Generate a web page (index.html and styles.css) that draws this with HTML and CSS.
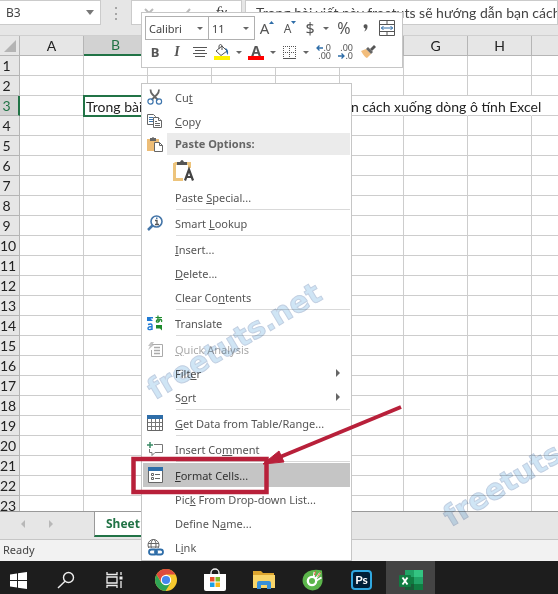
FILE: index.html
```html
<!DOCTYPE html>
<html lang="vi">
<head>
<meta charset="utf-8">
<title>Excel</title>
<link rel="stylesheet" href="styles.css">
</head>
<body>
<div class="app">
  <header class="formula-bar">
    <div class="name-box">
      <input class="name-input" type="text" value="B3" aria-label="Name Box">
      <button class="plain" aria-label="Open names"><svg width="8" height="5" viewBox="0 0 8 5"><path d="M0 0h8L4 5z" fill="#777"/></svg></button>
    </div>
    <span class="dots">⋮</span>
    <div class="fx-box">
      <button class="plain" aria-label="Cancel"><svg width="10" height="10" viewBox="0 0 10 10"><path d="M1 1l8 8M9 1L1 9" stroke="#bbb" stroke-width="2"/></svg></button>
      <button class="plain" aria-label="Enter"><svg width="12" height="10" viewBox="0 0 12 10"><path d="M1 6l3 3 7-8" fill="none" stroke="#bbb" stroke-width="2"/></svg></button>
      <button class="plain fx" aria-label="Insert Function">fx</button>
    </div>
    <input class="formula-input" type="text" aria-label="Formula" value="Trong bài viết này freetuts sẽ hướng dẫn bạn cách xuống dòng ô tính Excel">
  </header>

  <main class="sheet">
    <table class="grid">
      <thead>
        <tr><th class="corner"><svg width="12" height="12" viewBox="0 0 12 12"><path d="M12 0v12H0z" fill="#b4b4b4"/></svg></th></tr>
      </thead>
      <tbody></tbody>
    </table>
  </main>

  <nav class="tabs">
    <button class="plain" aria-label="Previous sheet"><svg width="4" height="8" viewBox="0 0 4 8"><path d="M4 0v8L0 4z" fill="#b8b8b8"/></svg></button>
    <button class="plain" aria-label="Next sheet"><svg width="4" height="8" viewBox="0 0 4 8"><path d="M0 0v8l4-4z" fill="#b8b8b8"/></svg></button>
    <button class="tab">Sheet1</button>
  </nav>
  <div class="status">Ready</div>

  <footer class="taskbar">
    <div class="system">
      <button class="task" aria-label="Start"><svg width="17" height="17" viewBox="0 0 17 17" fill="#fff"><path d="M0 2.500L7 1.500V8H0zM8 1.300L17 0v8H8zM0 9h7v6.500L0 14.500zM8 9h9v8l-9-1.300z"/></svg></button>
      <button class="task" aria-label="Search"><svg width="18" height="18" viewBox="0 0 18 18" fill="none" stroke="#eee" stroke-width="1.400"><circle cx="11.500" cy="6.500" r="5"/><path d="M8 10.200L1 17"/></svg></button>
      <button class="task" aria-label="Task View"><svg width="17" height="16" viewBox="0 0 17 16" fill="none" stroke="#eee" stroke-width="1.300"><path d="M1 0v2.500h10V0M1 16v-2.500h10V16M1 5h10v6H1zM15 0v3M15 9v7"/><path d="M13.500 4.500h3v3h-3z" fill="#eee" stroke="none"/></svg></button>
    </div>
    <button class="task app-task" aria-label="Chrome"><svg width="22" height="22" viewBox="0 0 22 22"><circle cx="11" cy="11" r="11" fill="#f7c92e"/><path d="M1.500 5.500A11 11 0 0 0 10.500 22L15.700 13.700 11 16 6.300 13.700z" fill="#2fa456"/><path d="M1.500 5.500A11 11 0 0 1 20.500 5.500H11L6.200 13z" fill="#dd4b3e"/><circle cx="11" cy="11" r="5.200" fill="#fff"/><circle cx="11" cy="11" r="4.100" fill="#4586ee"/></svg></button>
    <button class="task app-task" aria-label="Store"><svg width="24" height="24" viewBox="0 0 24 24"><path d="M8 7V5a4 4 0 0 1 8 0v2" fill="none" stroke="#eee" stroke-width="1.400"/><path d="M1 6h22v15q0 2-2 2H3q-2 0-2-2z" fill="#fff"/><path d="M7 9h4.500v4.500H7z" fill="#e8502c"/><path d="M12.500 9H17v4.500h-4.500z" fill="#7cb928"/><path d="M7 14.500h4.500V19H7z" fill="#1ba0e6"/><path d="M12.500 14.500H17V19h-4.500z" fill="#f9b817"/></svg></button>
    <button class="task app-task" aria-label="File Explorer"><svg width="22" height="20" viewBox="0 0 22 20"><path d="M0 1h8l2 2h11v5H0z" fill="#dca52f"/><path d="M0 5h22v13H0z" fill="#f8d569"/><path d="M4 19v-6q0-2 2-2h10q2 0 2 2v6h-4v-4H8v4z" fill="#378fd9"/></svg></button>
    <button class="task app-task" aria-label="Browser"><svg width="22" height="22" viewBox="0 0 22 22"><path d="M20 1.500Q12-.5 6 2.500A10 10 0 1 0 20.500 10z" fill="#5cb54b"/><circle cx="10" cy="12" r="5.300" fill="#fff"/><circle cx="10" cy="12" r="3" fill="#5cb54b"/><path d="M11.500 9l1-6M13.500 10l4.500-6M14.500 11.500l5-3" stroke="#fff" stroke-width="1.800"/><path d="M12.500 6l1-4M15.500 7.500l3-4" stroke="#e3563b"/></svg></button>
    <button class="task app-task" aria-label="Photoshop"><span class="ps">Ps</span></button>
    <button class="task app-task active" aria-label="Excel"><svg width="24" height="22" viewBox="0 0 24 22"><path d="M6 1h9v7H6z" fill="#21a366"/><path d="M15 1h9v7h-9z" fill="#33c481"/><path d="M6 8h9v7H6z" fill="#107c41"/><path d="M15 8h9v7h-9z" fill="#21a366"/><path d="M6 15h18v6H6z" fill="#185c37"/><path d="M15 15h9v6h-9z" fill="#107c41"/><rect y="6" width="12" height="12" rx="1" fill="#107c41"/><path d="M3.500 8.500l5 7M8.500 8.500l-5 7" stroke="#fff" stroke-width="1.900"/></svg></button>
  </footer>

  <div class="mini-toolbar" role="toolbar">
    <div class="tools">
      <span class="pick pick-font"><select aria-label="Font"><option>Calibri</option></select><i class="down"></i></span>
      <span class="pick pick-size"><select aria-label="Font Size"><option>11</option></select><i class="down"></i></span>
      <button class="tool w24" aria-label="Increase Font Size"><span class="letter">A</span><svg class="caret" width="5" height="3" viewBox="0 0 5 3"><path d="M0 3h5L2.500 0z" fill="#2e6da8"/></svg></button>
      <button class="tool w22" aria-label="Decrease Font Size"><span class="letter small">A</span><svg class="caret" width="5" height="3" viewBox="0 0 5 3"><path d="M0 0h5L2.500 3z" fill="#2e6da8"/></svg></button>
      <button class="tool w18 sign">$</button>
      <button class="tool w14" aria-label="Currency options"><i class="down"></i></button>
      <button class="tool w22 sign">%</button>
      <button class="tool w20" aria-label="Comma Style"><svg width="5" height="8" viewBox="0 0 5 8"><path d="M.5 2a2 2 0 1 1 4 .5Q4.500 6 1 7.500 2.500 6 2.500 4.500.5 4 .5 2z" fill="#555"/></svg></button>
      <button class="tool w24" aria-label="Merge and Center"><svg width="16" height="16" viewBox="0 0 16 16" fill="none" stroke="#555"><path d="M.5.5h15v15H.5zM.5 4.500h15M.5 11.500h15M8 .5v4M8 11.500v4"/><path d="M2 8h12M4.500 6L2.500 8l2 2M11.500 6l2 2-2 2" stroke="#2e6da8"/></svg></button>
    </div>
    <div class="tools">
      <button class="tool w20 bold">B</button>
      <button class="tool w24 italic">I</button>
      <button class="tool w22" aria-label="Center"><svg width="14" height="11" viewBox="0 0 14 11" stroke="#555"><path d="M0 .5h14M2 3.500h10M0 6.500h14M2 9.500h10"/></svg></button>
      <button class="tool w22" aria-label="Fill Color"><svg width="16" height="16" viewBox="0 0 16 16"><path d="M2 7l6-5 5 5-6 4.500z" fill="#fff" stroke="#555"/><path d="M5 5V1.500q1.500-2 3 0V6" fill="none" stroke="#555"/><path d="M11 4q4 1 3 7-2-2-2-5z" fill="#2e6da8"/><path d="M0 12h16v4H0z" fill="#fff200"/></svg></button>
      <button class="tool w12" aria-label="Fill options"><i class="down"></i></button>
      <button class="tool w22 font-color" aria-label="Font Color"><span>A</span></button>
      <button class="tool w12" aria-label="Font Color options"><i class="down"></i></button>
      <button class="tool w20" aria-label="Borders"><svg width="13" height="13" viewBox="0 0 13 13" fill="none" stroke="#555"><path d="M.5 0v12M12.500 0v12M6.500 0v12M0 .5h13M0 6.500h13" stroke-dasharray="1 1"/><path d="M0 12.500h13"/></svg></button>
      <button class="tool w14" aria-label="Border options"><i class="down"></i></button>
      <button class="tool w20 decimals" aria-label="Increase Decimal"><span><svg width="7" height="6" viewBox="0 0 7 6"><path d="M7 3H1M3.500.5L1 3l2.500 2.500" fill="none" stroke="#2e6da8" stroke-width="1.300"/></svg>.0</span><span>.00</span></button>
      <button class="tool w24 decimals" aria-label="Decrease Decimal"><span>.00</span><span><svg width="7" height="6" viewBox="0 0 7 6"><path d="M0 3h6M3.500.5L6 3 3.500 5.500" fill="none" stroke="#2e6da8" stroke-width="1.300"/></svg>.0</span></button>
      <button class="tool w22" aria-label="Format Painter"><svg width="16" height="14" viewBox="0 0 16 14"><path d="M1 6l5-2 5 5-4 4q-2 0-6-7z" fill="#f2bd7c"/><path d="M6 4l2-2 5 5-2 2z" fill="#666"/><path d="M10 4l4-4 2 2-4 4z" fill="#555"/></svg></button>
    </div>
  </div>

  <div class="menu" role="menu">
    <button class="item"><span class="icon"><svg width="16" height="16" viewBox="0 0 16 16" fill="none"><path d="M3.500.5q0 3 2 5L11 11M12 .5q0 3-2 5L4.500 11" stroke="#666" stroke-width="1.800"/><circle cx="3.500" cy="12.500" r="2.600" stroke="#3f76ad" stroke-width="1.200"/><circle cx="12" cy="12.500" r="2.600" stroke="#3f76ad" stroke-width="1.200"/></svg></span><span>Cu<u>t</u></span></button>
    <button class="item"><span class="icon"><svg width="16" height="15" viewBox="0 0 16 15" fill="#fff" stroke="#666"><path d="M.5.500h6l2 2v8h-8z"/><path d="M2 3.500h4M2 5.500h4M2 7.500h4" stroke="#3f76ad"/><path d="M6.500 3.500h5l3 3v7h-8z"/><path d="M11.500 3.500v3h3M8 7.500h2M8 9.500h5M8 11.500h5"/></svg></span><span><u>C</u>opy</span></button>
    <div class="item heading"><span class="icon"><svg width="16" height="16" viewBox="0 0 16 16"><path d="M0 3h12v12H0z" fill="#edbd77"/><path d="M3 2h2q1-2 2 0h2v3H3z" fill="#666"/><path d="M7.500 6.500h5l3 3v6h-8z" fill="#fff" stroke="#666"/><path d="M12.500 6.500v3h3" fill="none" stroke="#666"/></svg></span><span class="heading-text">Paste Options:</span></div>
    <button class="paste-choice" aria-label="Keep Text Only"><svg width="22" height="23" viewBox="0 0 22 23"><path d="M1.500 4v16.500H10M1.500 4.500h4M12 4.500h4.500V9" fill="none" stroke="#edc47c" stroke-width="3"/><path d="M4 3h3q2-4 4 0h3v3H4z" fill="#555"/><path d="M12 21.500l4-11 4 11M13.300 18h5.500" fill="none" stroke="#444" stroke-width="2.200"/></svg></button>
    <button class="item"><span class="icon"></span><span>Paste <u>S</u>pecial...</span></button>
    <hr>
    <button class="item"><span class="icon"><svg width="16" height="16" viewBox="0 0 16 16" fill="none" stroke="#4475a8"><circle cx="9.500" cy="6.500" r="5.500" stroke-width="1.600"/><path d="M5.500 10.500L1 15" stroke-width="2.500"/><path d="M8 5.500h2v4M8 9.500h4" stroke="#555" stroke-width="1.300"/><path d="M9 2.500h1.500v1.500H9z" fill="#4475a8" stroke="none"/></svg></span><span>Smart <u>L</u>ookup</span></button>
    <hr>
    <button class="item"><span class="icon"></span><span><u>I</u>nsert...</span></button>
    <button class="item"><span class="icon"></span><span><u>D</u>elete...</span></button>
    <button class="item"><span class="icon"></span><span>Clear Co<u>n</u>tents</span></button>
    <hr>
    <button class="item"><span class="icon"><svg width="16" height="16" viewBox="0 0 16 16" fill="none"><path d="M0 2h6v1.500H3.500L6 6H0z" fill="#1f7ad4"/><path d="M1 9.500q4-1.500 4 1V15M5 11.500q-4 0-4 2t4 .500" stroke="#1f7ad4" stroke-width="1.400"/><path d="M8.500 2.500h6.500M11 .5q-.5 4 .5 6.500M13.500 4q-1.500 4-4 3-1-2 3-3 3 0 2 3" stroke="#1d8a2c" stroke-width="1.200"/><path d="M9 10h6v5.500L13 13.500H9z" fill="#1d8a2c"/></svg></span><span>Translate</span></button>
    <hr>
    <button class="item" disabled><span class="icon"><svg width="15" height="15" viewBox="0 0 15 15" fill="none" stroke="#aaa"><path d="M4 2.500h10.500v12h-11V8"/><path d="M6 5.500h6M6 8.500h6M6 11.500h6" stroke-width="1.600"/><path d="M3 0h3L4 3h2L0 8l2-4H0z" fill="#c4c4c4" stroke="none"/></svg></span><span><u>Q</u>uick Analysis</span></button>
    <button class="item"><span class="icon"></span><span>Filt<u>e</u>r</span><i class="more"></i></button>
    <button class="item"><span class="icon"></span><span>S<u>o</u>rt</span><i class="more"></i></button>
    <hr>
    <button class="item"><span class="icon"><svg width="16" height="16" viewBox="0 0 16 16" fill="none"><path d="M.5.500h15v15H.5z" fill="#fff" stroke="#666"/><path d="M0 0h16v4H0z" fill="#2e6da8"/><path d="M4.500 4v11M8.500 4v11M12.500 4v11M1 7.500h14M1 11.500h14" stroke="#777"/></svg></span><span><u>G</u>et Data from Table/Range...</span></button>
    <hr>
    <button class="item"><span class="icon"><svg width="16" height="15" viewBox="0 0 16 15" fill="none"><path d="M7 2.500h8.500v8H8l-3 3v-3H2.500V7" stroke="#777"/><path d="M3 0v6M0 3h6" stroke="#3a8a66" stroke-width="1.500"/></svg></span><span>Insert Co<u>m</u>ment</span></button>
    <hr>
    <button class="item selected"><span class="icon"><svg width="15" height="16" viewBox="0 0 15 16" fill="none"><path d="M.5.500h14v15H.5z" fill="#fff" stroke="#666"/><path d="M0 0h15v4H0z" fill="#2e6da8"/><path d="M3.500 6.500h2v2h-2zM3.500 10.500h2v2h-2zM7 7.500h5M7 11.500h5" stroke="#666"/></svg></span><span><u>F</u>ormat Cells...</span></button>
    <button class="item"><span class="icon"></span><span>Pic<u>k</u> From Drop-down List...</span></button>
    <button class="item"><span class="icon"></span><span>Define N<u>a</u>me...</span></button>
    <button class="item"><span class="icon"><svg width="17" height="17" viewBox="0 0 17 17" fill="none"><g stroke="#666"><circle cx="6.500" cy="6" r="5.500"/><ellipse cx="6.500" cy="6" rx="2.500" ry="5.500"/><path d="M1 4.500h11M1 8h11"/></g><path d="M1 9h16v8H1z" fill="#fff"/><g stroke="#2e6da8" stroke-width="1.800"><rect x="2" y="10.500" width="8" height="5" rx="2.500"/><rect x="8" y="10.500" width="8" height="5" rx="2.500"/></g></svg></span><span>L<u>i</u>nk</span></button>
  </div>

  <span class="watermark mark-menu">freetuts.net</span>
  <span class="watermark mark-sheet">freetuts.net</span>

  <svg class="callout" width="276" height="94" viewBox="0 0 276 94" fill="none" stroke="#b8203a">
    <rect x="3.500" y="56" width="133" height="33" stroke-width="4.500"/>
    <path d="M150 54L271 4" stroke-width="4"/>
    <path d="M133 61L149 48 154 59z" fill="#b8203a" stroke-width="1"/>
  </svg>
</div>
<script src="script.js"></script>
</body>
</html>
```

FILE: styles.css
```css
* { box-sizing: border-box; }
body { margin: 0; font-family: "Noto Sans", "Open Sans", sans-serif; font-size: 12px; color: #444; }
button, input, select { font: inherit; color: inherit; margin: 0; padding: 0; border: 0; background: none; }
svg { display: block; flex: none; }

.app { position: relative; display: flex; flex-direction: column; height: 100vh; overflow: hidden; background: #e6e6e6; }
.plain { display: flex; align-items: center; justify-content: center; }

/* Formula bar */
.formula-bar { display: flex; flex: none; height: 36px; padding-bottom: 10px; border-bottom: 1px solid #cfcfcf; }
.name-box, .fx-box, .formula-input { background: #fff; border: 1px solid #cbcbcb; border-width: 1px 1px 1px 0; }
.name-box { display: flex; width: 101px; padding: 0 6px; }
.name-input { flex: 1; min-width: 0; }
.dots { width: 30px; line-height: 26px; text-align: center; font-size: 16px; color: #999; }
.fx-box { display: flex; justify-content: space-between; width: 111px; margin-right: 3px; padding: 0 14px 0 12px; border-left-width: 1px; }
.fx { font: italic 16px "Liberation Serif", serif; }
.formula-input { flex: 1; min-width: 0; padding-left: 10px; border-left-width: 1px; font: 14px Lato, "Noto Sans", sans-serif; }

/* Worksheet */
.sheet { flex: 1; min-height: 0; overflow: hidden; background: #fff; }
.grid { width: 660px; table-layout: fixed; border-collapse: separate; border-spacing: 0; font: 14px Lato, "Noto Sans", sans-serif; color: #222; }
.grid th { height: 20px; padding: 0; background: #e6e6e6; border: solid #b5b5b5; border-width: 0 1px 1px 0; font-weight: 400; line-height: 19px; }
.grid thead th { width: 64px; }
.grid thead .corner { width: 20px; }
.corner svg { margin-left: 4px; }
.grid tbody th { padding-right: 6px; }
.grid td { height: 20px; padding: 0; border: solid #cdcdcd; border-width: 0 1px 1px 0; line-height: 19px; white-space: nowrap; }
.grid .spill { border-right-color: transparent; }
.grid thead .picked { background: #d2d2d2; color: #217346; border-bottom: 2px solid #217346; line-height: 18px; }
.grid tbody .picked { background: #d2d2d2; color: #217346; border-right: 2px solid #217346; padding-right: 5px; }
.grid .active-cell { border: 0; padding-left: 2px; outline: 2px solid #217346; outline-offset: -1px; }
.active-cell span { display: block; width: 0; }

/* Sheet tabs and status */
.tabs { display: flex; flex: none; height: 28px; border-top: 1px solid #999; }
.tabs .plain { width: 28px; height: 24px; }
.tabs .plain:first-child { margin-left: 9px; }
.tab { height: 25px; margin-left: 29px; padding: 0 11px; background: #fff; border-left: 1px solid #999; border-bottom: 2px solid #217346; color: #217346; font-size: 12px; font-weight: 700; }
.status { flex: none; height: 22px; padding-left: 3px; background: #f2f2f2; border-top: 1px solid #c6c6c6; font-size: 11px; line-height: 20px; }

/* Taskbar */
.taskbar { display: flex; flex: none; height: 33px; overflow: hidden; background: #1d1d1d; }
.system { display: flex; margin: 0 3px 0 -6px; }
.task { display: flex; align-items: center; justify-content: center; flex: none; width: 48px; height: 38px; }
.app-task { width: 49px; }
.active { background: #444; }
.ps { width: 21px; height: 20px; border: 2px solid #31a8e0; border-radius: 4px; background: #001e36; color: #fff; font: 700 12px/16px Lato, sans-serif; }

/* Floating format toolbar */
.mini-toolbar { position: absolute; left: 141px; top: 12px; width: 262px; padding: 3px; background: #fff; border: 1px solid #c6c6c6; }
.tools { display: flex; height: 24px; }
.pick { position: relative; display: flex; align-items: center; border: 1px solid #b0b0b0; }
.pick select { width: 100%; height: 22px; padding-left: 3px; appearance: none; font-size: 11px; }
.pick .down { position: absolute; right: 5px; }
.pick-font { width: 64px; }
.pick-size { width: 46px; border-left: 0; }
.down { border: solid transparent; border-width: 3px 3px 0; border-top-color: #666; }
.tool { display: flex; align-items: center; justify-content: center; flex: none; color: #555; }
.w12 { width: 12px; }
.w14 { width: 14px; }
.w18 { width: 18px; }
.w20 { width: 20px; }
.w22 { width: 22px; }
.w24 { width: 24px; }
.letter { font-size: 15px; }
.letter.small { font-size: 12px; }
.caret { align-self: flex-start; margin-top: 5px; }
.sign { font-size: 16px; }
.bold { font-weight: 700; font-size: 13px; }
.italic { font: italic 700 14px "Liberation Serif", serif; }
.font-color span { width: 16px; height: 16px; border-bottom: 4px solid #f00; font-size: 14px; font-weight: 700; line-height: 13px; }
.decimals { flex-direction: column; font-size: 9px; line-height: 8px; align-items: center; }
.decimals span { display: flex; align-items: center; justify-content: flex-end; width: 16px; }

/* Context menu */
.menu { position: absolute; left: 141px; top: 83px; width: 211px; padding: 1px; background: #fff; border: 1px solid #c6c6c6; font-size: 11px; color: #555; }
.item { display: flex; align-items: center; width: 100%; height: 24px; text-align: left; white-space: nowrap; }
.item u { text-underline-offset: 1px; }
.icon { display: flex; align-items: center; justify-content: center; flex: none; width: 24px; margin-right: 8px; }
.item:disabled { color: #aaa; }
.heading { height: 22px; font-weight: 700; color: #666; }
.heading .icon { margin-right: 0; }
.heading-text { flex: 1; padding-left: 8px; background: #ebebeb; line-height: 22px; }
.paste-choice { display: flex; align-items: center; height: 30px; padding-left: 30px; }
.menu hr { height: 2px; margin: 0 0 0 33px; border: 0; border-top: 1px solid #d9d9d9; }
.selected { background: #c5c5c5; color: #333; }
.more { margin: 0 10px 0 auto; border: solid transparent; border-width: 4px 0 4px 4px; border-left-color: #666; }

/* Overlays */
.watermark { position: absolute; transform-origin: 0 100%; transform: rotate(-31deg); font: 700 29px/36px "DejaVu Sans", sans-serif; color: #cfe5f5; -webkit-text-stroke: 1px #c3d0e2; mix-blend-mode: multiply; pointer-events: none; white-space: nowrap; }
.mark-menu { left: 159px; top: 371px; }
.mark-sheet { left: 455px; top: 498px; }
.callout { position: absolute; left: 130px; top: 403px; pointer-events: none; }
```

FILE: script.js
```js
const columns = ["A", "B", "C", "D", "E", "F", "G", "H", "I", "J"];
const active = { row: 3, column: "B" };
const text = "Trong bài viết này freetuts sẽ hướng dẫn bạn cách xuống dòng ô tính Excel";

const headRow = document.querySelector(".grid thead tr");
for (const name of columns) {
  const th = document.createElement("th");
  th.textContent = name;
  if (name === active.column) th.className = "picked";
  headRow.append(th);
}

const body = document.querySelector(".grid tbody");
for (let row = 1; row <= 23; row++) {
  const tr = document.createElement("tr");
  const th = document.createElement("th");
  th.textContent = row;
  if (row === active.row) th.className = "picked";
  tr.append(th);
  for (const name of columns) {
    const td = document.createElement("td");
    if (row === active.row && name === active.column) {
      td.className = "active-cell";
      const span = document.createElement("span");
      span.textContent = text;
      td.append(span);
    } else if (row === active.row && name > active.column) {
      td.className = "spill";
    }
    tr.append(td);
  }
  body.append(tr);
}
```
